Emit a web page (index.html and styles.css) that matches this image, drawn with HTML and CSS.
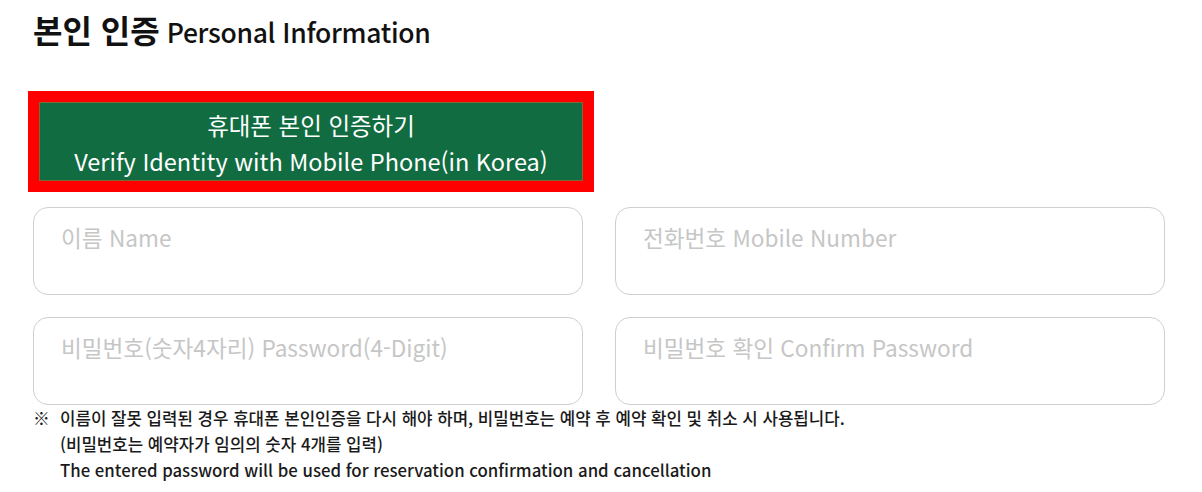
FILE: index.html
```html
<!DOCTYPE html>
<html lang="ko">
<head>
<meta charset="utf-8">
<title>본인 인증</title>
<link rel="stylesheet" href="styles.css">
</head>
<body>
<div class="wrap">
  <h2 class="title"><span class="title-ko">본인 인증</span> <span class="title-en">Personal Information</span></h2>
  <div class="verify-frame">
    <button class="verify-btn" type="button">
      <span>휴대폰 본인 인증하기</span>
      <span>Verify Identity with Mobile Phone(in Korea)</span>
    </button>
  </div>
  <div class="fields">
    <div class="field"><span class="ph">이름 Name</span></div>
    <div class="field"><span class="ph">전화번호 Mobile Number</span></div>
    <div class="field"><span class="ph">비밀번호(숫자4자리) Password(4-Digit)</span></div>
    <div class="field"><span class="ph">비밀번호 확인 Confirm Password</span></div>
  </div>
  <div class="note">
    <span class="mark">※</span>
    <div class="note-text">
      <p>이름이 잘못 입력된 경우 휴대폰 본인인증을 다시 해야 하며, 비밀번호는 예약 후 예약 확인 및 취소 시 사용됩니다.</p>
      <p>(비밀번호는 예약자가 임의의 숫자 4개를 입력)</p>
      <p>The entered password will be used for reservation confirmation and cancellation</p>
    </div>
  </div>
</div>
</body>
</html>
```

FILE: styles.css
```css
* { box-sizing: border-box; }
html, body { margin: 0; padding: 0; background: #fff; }
body {
  font-family: "Noto Sans CJK KR", "Noto Sans", sans-serif;
  color: #111;
}
.wrap { padding: 0 28px; }
.title {
  margin: 8px 0 0 5px;
  height: 42px;
  display: flex;
  align-items: baseline;
  gap: 7px;
  line-height: 42px;
  font-weight: 400;
  color: #111;
}
.title-ko { font-size: 32px; font-weight: 700; }
.title-en { font-size: 26.5px; font-weight: 500; letter-spacing: -0.3px; }
.verify-frame {
  margin-top: 41px;
  width: 566px;
  border: 11px solid #ff0000;
}
.verify-btn {
  display: flex;
  flex-direction: column;
  align-items: center;
  justify-content: center;
  width: 100%;
  height: 79px;
  margin: 0;
  padding: 2px 0 0;
  background: #116c41;
  border: 1px solid #7c6a35;
  color: #fff;
  font-family: inherit;
  font-size: 23.5px;
  line-height: 36px;
}
.fields {
  margin: 15px 0 0 5px;
  display: grid;
  grid-template-columns: 550px 550px;
  column-gap: 32px;
  row-gap: 22px;
}
.field {
  height: 88px;
  border: 1px solid #cfcfcf;
  border-radius: 15px;
  padding: 15px 0 0 27px;
}
.ph {
  font-size: 22.6px;
  line-height: 30px;
  color: #c6c6c6;
}
.note {
  display: flex;
  margin: 0 0 0 5px;
  font-size: 16.8px;
  line-height: 26px;
  font-weight: 500;
  color: #1a1a1a;
}
.mark { width: 27px; flex: none; font-weight: 400; }
.note-text p { margin: 0; }
```
